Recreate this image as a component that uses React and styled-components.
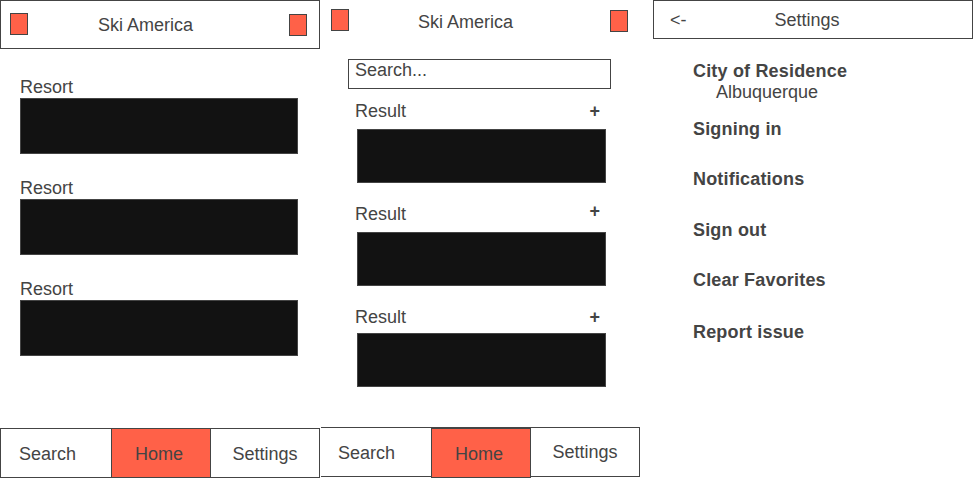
import React from "react";
import styled, { createGlobalStyle } from "styled-components";

const INK = "#444";
const ORANGE = "#ff6148";

const GlobalStyle = createGlobalStyle`
  html, body { margin: 0; padding: 0; background: #fff; }
  body {
    font-family: "Liberation Sans", Arial, sans-serif;
    font-size: 18px;
    line-height: 21px;
    color: ${INK};
    overflow: hidden;
  }
  * { box-sizing: border-box; }
`;

const Canvas = styled.div`
  display: flex;
  width: 978px;
  height: 480px;
`;

const Screen = styled.div`
  display: flex;
  flex-direction: column;
  width: 320px;
  height: 480px;
  margin-left: ${(p) => p.$dx || 0}px;
`;

const Header = styled.div`
  display: flex;
  align-items: ${(p) => (p.$center ? "center" : "flex-start")};
  height: ${(p) => p.$h}px;
  padding: ${(p) => p.$pad};
  border: ${(p) => (p.$bordered ? `1px solid ${INK}` : "none")};
`;

const Square = styled.div`
  width: 18px;
  height: 22px;
  background: ${ORANGE};
  border: 1px solid ${INK};
  margin-top: ${(p) => p.$dy || 0}px;
  margin-left: ${(p) => (p.$right ? "auto" : "0")};
`;

const Title = styled.div`
  margin-left: ${(p) => p.$dx || 0}px;
  margin-top: ${(p) => p.$dy || 0}px;
  white-space: nowrap;
`;

const Back = styled.div`
  white-space: nowrap;
`;

/* screen 1 */
const ResortList = styled.div`
  display: flex;
  flex-direction: column;
  gap: 24px;
  padding: 28px 0 0 20px;
`;

const Resort = styled.div`
  display: flex;
  flex-direction: column;
`;

const Label = styled.div`
  white-space: nowrap;
`;

const DarkCard = styled.div`
  width: ${(p) => p.$w}px;
  height: ${(p) => p.$h}px;
  background: #121212;
  border: 1px solid ${INK};
  margin-left: ${(p) => p.$dx || 0}px;
`;

/* screen 2 */
const SearchArea = styled.div`
  display: flex;
  flex-direction: column;
  padding-top: 10px;
`;

const SearchBox = styled.div`
  width: 263px;
  height: 30px;
  margin-left: 28px;
  padding: 0 6px;
  border: 1px solid ${INK};
`;

const Results = styled.div`
  display: flex;
  flex-direction: column;
  gap: 21px;
  margin-top: 12px;
`;

const Result = styled.div`
  display: flex;
  flex-direction: column;
  gap: ${(p) => p.$gap}px;
`;

const ResultHead = styled.div`
  display: flex;
  justify-content: space-between;
  align-items: flex-start;
  width: 245px;
  margin-left: 35px;
`;

const Plus = styled.span`
  font-weight: bold;
  margin-top: ${(p) => -(p.$lift || 0)}px;
`;

/* tab bars */
const TabBar = styled.div`
  display: flex;
  height: 50px;
  margin-top: auto;
  margin-bottom: ${(p) => p.$mb}px;
  margin-left: ${(p) => p.$ml || 0}px;
  border: 1px solid ${INK};
  border-left: ${(p) => (p.$noLeft ? "none" : `1px solid ${INK}`)};
`;

const Tab = styled.div`
  display: flex;
  align-items: center;
  justify-content: ${(p) => (p.$start ? "flex-start" : "center")};
  padding-left: ${(p) => p.$pl || 0}px;
  padding-top: 2px;
  padding-bottom: ${(p) => (p.$lift || 0) * 2}px;
  width: ${(p) => (p.$w ? `${p.$w}px` : "auto")};
  flex: ${(p) => (p.$w ? "none" : "1")};
  white-space: nowrap;
`;

const ActiveTab = styled(Tab)`
  background: ${ORANGE};
  border-left: 1px solid ${INK};
  border-right: 1px solid ${INK};
  padding-right: 4px;
  ${(p) =>
    p.$raised &&
    `
    align-self: flex-start;
    height: 50px;
    border-top: 1px solid ${INK};
    border-bottom: 1px solid ${INK};
  `}
`;

/* screen 3 */
const SettingsList = styled.div`
  display: flex;
  flex-direction: column;
  padding: 22px 0 0 40px;
`;

const SettingItem = styled.div`
  font-weight: ${(p) => (p.$plain ? "normal" : "bold")};
  letter-spacing: ${(p) => (p.$plain ? "0" : "0.18px")};
  margin-top: ${(p) => p.$mt || 0}px;
  margin-left: ${(p) => p.$indent || 0}px;
  white-space: nowrap;
`;

function BottomTabs({ variant }) {
  const second = variant === 2;
  return (
    <TabBar $mb={second ? 3 : 2} $ml={second ? 1 : 0} $noLeft={second}>
      <Tab $w={110} $start $pl={second ? 17 : 18}>
        Search
      </Tab>
      <ActiveTab $w={100} $raised={second}>
        Home
      </ActiveTab>
      <Tab $lift={second ? 1 : 0}>Settings</Tab>
    </TabBar>
  );
}

const results = [
  { gap: 7, lift: 0 },
  { gap: 7, lift: 3 },
  { gap: 5, lift: 0 },
];

const settings = [
  { text: "Signing in", mt: 16 },
  { text: "Notifications", mt: 29 },
  { text: "Sign out", mt: 30 },
  { text: "Clear Favorites", mt: 29 },
  { text: "Report issue", mt: 31 },
];

export default function App() {
  return (
    <>
      <GlobalStyle />
      <Canvas>
        <Screen>
          <Header $bordered $h={49} $pad="12px 12px 0 9px">
            <Square />
            <Title $dx={70} $dy={2}>
              Ski America
            </Title>
            <Square $right $dy={1} />
          </Header>
          <ResortList>
            {[0, 1, 2].map((i) => (
              <Resort key={i}>
                <Label>Resort</Label>
                <DarkCard $w={278} $h={56} />
              </Resort>
            ))}
          </ResortList>
          <BottomTabs variant={1} />
        </Screen>

        <Screen>
          <Header $h={49} $pad="9px 12px 0 11px">
            <Square />
            <Title $dx={69} $dy={3}>
              Ski America
            </Title>
            <Square $right $dy={1} />
          </Header>
          <SearchArea>
            <SearchBox>Search...</SearchBox>
            <Results>
              {results.map((r, i) => (
                <Result key={i} $gap={r.gap}>
                  <ResultHead>
                    <Label>Result</Label>
                    <Plus $lift={r.lift}>+</Plus>
                  </ResultHead>
                  <DarkCard $w={249} $h={54} $dx={37} />
                </Result>
              ))}
            </Results>
          </SearchArea>
          <BottomTabs variant={2} />
        </Screen>

        <Screen $dx={13}>
          <Header $bordered $center $h={39} $pad="2px 0 0 16px">
            <Back>&lt;-</Back>
            <Title $dx={88}>Settings</Title>
          </Header>
          <SettingsList>
            <SettingItem>City of Residence</SettingItem>
            <SettingItem $plain $indent={23}>
              Albuquerque
            </SettingItem>
            {settings.map((s) => (
              <SettingItem key={s.text} $mt={s.mt}>
                {s.text}
              </SettingItem>
            ))}
          </SettingsList>
        </Screen>
      </Canvas>
    </>
  );
}
